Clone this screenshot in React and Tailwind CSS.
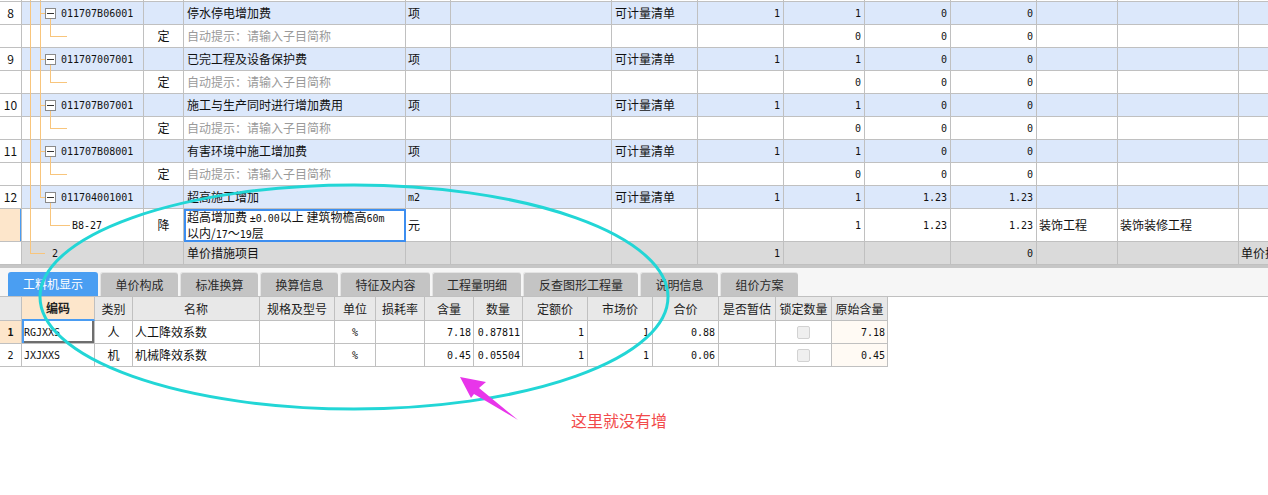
import React from "react";

const TOP_W = [
  "w-[22px]",
  "w-[122px]",
  "w-[40px]",
  "w-[222px]",
  "w-[45px]",
  "w-[161px]",
  "w-[86px]",
  "w-[86px]",
  "w-[81px]",
  "w-[86px]",
  "w-[86px]",
  "w-[81px]",
  "w-[121px]",
  "w-[100px]",
];

const BOT_W = [
  "w-[22px]",
  "w-[73px]",
  "w-[38px]",
  "w-[127px]",
  "w-[75px]",
  "w-[41px]",
  "w-[49px]",
  "w-[49px]",
  "w-[49px]",
  "w-[65px]",
  "w-[65px]",
  "w-[66px]",
  "w-[57px]",
  "w-[56px]",
  "w-[56px]",
];

const mono = "font-['DejaVu_Sans_Mono',monospace] text-[10px]";
const LINE = "bg-[#f8c57c]";

// 上方清单行
const rows = [
  { kind: "main", num: "8", code: "011707B06001", name: "停水停电增加费", unit: "项", c7: "1", c8: "1", c9: "0", c10: "0" },
  { kind: "sub" },
  { kind: "main", num: "9", code: "011707007001", name: "已完工程及设备保护费", unit: "项", c7: "1", c8: "1", c9: "0", c10: "0" },
  { kind: "sub" },
  { kind: "main", num: "10", code: "011707B07001", name: "施工与生产同时进行增加费用", unit: "项", c7: "1", c8: "1", c9: "0", c10: "0" },
  { kind: "sub" },
  { kind: "main", num: "11", code: "011707B08001", name: "有害环境中施工增加费", unit: "项", c7: "1", c8: "1", c9: "0", c10: "0" },
  { kind: "sub" },
  { kind: "lastMain", num: "12", code: "011704001001", name: "超高施工增加", unit: "m2", c7: "1", c8: "1", c9: "1.23", c10: "1.23" },
];

const Tree = ({ kind }) => {
  const full = "absolute top-0 bottom-[-1px] w-px";
  return (
    <>
      {kind === "root" ? (
        <>
          <span className={`absolute top-0 h-[12px] left-[8px] w-px ${LINE}`} />
          <span className={`absolute top-[11px] left-[8px] w-[15px] h-px ${LINE}`} />
        </>
      ) : (
        <span className={`${full} left-[8px] ${LINE}`} />
      )}
      {(kind === "main" || kind === "sub") && <span className={`${full} left-[18px] ${LINE}`} />}
      {kind === "lastMain" && <span className={`absolute top-0 h-[12px] left-[18px] w-px ${LINE}`} />}
      {(kind === "main" || kind === "lastMain") && (
        <>
          <span className={`absolute top-[11px] left-[18px] w-[5px] h-px ${LINE}`} />
          <span className="absolute top-[6px] left-[23px] w-[11px] h-[11px] border border-[#8a8a8a] bg-white flex items-center justify-center">
            <span className="w-[7px] h-px bg-[#333]" />
          </span>
          <span className={`absolute top-[17px] bottom-[-1px] left-[28px] w-px ${LINE}`} />
        </>
      )}
      {kind === "sub" && (
        <>
          <span className={`absolute top-0 h-[12px] left-[28px] w-px ${LINE}`} />
          <span className={`absolute top-[11px] left-[28px] w-[17px] h-px ${LINE}`} />
        </>
      )}
      {kind === "leaf" && (
        <>
          <span className={`absolute top-0 h-[17px] left-[28px] w-px ${LINE}`} />
          <span className={`absolute top-[16px] left-[28px] w-[20px] h-px ${LINE}`} />
        </>
      )}
    </>
  );
};

const cellBase = "shrink-0 box-border border-r border-b border-[#c0c0c0] flex items-center overflow-hidden whitespace-nowrap";

const TopRow = ({ r }) => {
  const isMain = r.kind === "main" || r.kind === "lastMain";
  const bg = isMain ? "bg-[#dce8fb]" : "bg-white";
  const vals = isMain ? [r.c7, r.c8, r.c9, r.c10] : ["", "0", "0", "0"];
  return (
    <div className="flex h-[23px]">
      <div className={`${cellBase} ${TOP_W[0]} bg-white justify-center text-[12px]`}>{r.num}</div>
      <div className={`${cellBase} ${TOP_W[1]} ${bg} relative overflow-visible pl-[39px] ${mono}`}>
        <Tree kind={r.kind} />
        {isMain && <span className="relative">{r.code}</span>}
      </div>
      <div className={`${cellBase} ${TOP_W[2]} ${bg} justify-center`}>{isMain ? "" : "定"}</div>
      <div className={`${cellBase} ${TOP_W[3]} ${bg} pl-[3px] ${isMain ? "" : "text-[#9a9a9a]"}`}>
        {isMain ? r.name : "自动提示：请输入子目简称"}
      </div>
      <div className={`${cellBase} ${TOP_W[4]} ${bg} pl-[2px] ${r.unit === "m2" ? mono : ""}`}>{isMain ? r.unit : ""}</div>
      <div className={`${cellBase} ${TOP_W[5]} ${bg}`} />
      <div className={`${cellBase} ${TOP_W[6]} ${bg} pl-[3px]`}>{isMain ? "可计量清单" : ""}</div>
      {vals.map((v, i) => (
        <div key={i} className={`${cellBase} ${TOP_W[7 + i]} ${bg} justify-end pr-[3px] ${mono}`}>
          {v}
        </div>
      ))}
      <div className={`${cellBase} ${TOP_W[11]} ${bg}`} />
      <div className={`${cellBase} ${TOP_W[12]} ${bg}`} />
      <div className={`${cellBase} ${TOP_W[13]} ${bg}`} />
    </div>
  );
};

const tabs = [
  { t: "工料机显示", w: "w-[90px]", active: true },
  { t: "单价构成", w: "w-[78px]" },
  { t: "标准换算", w: "w-[78px]" },
  { t: "换算信息", w: "w-[78px]" },
  { t: "特征及内容", w: "w-[90px]" },
  { t: "工程量明细", w: "w-[89px]" },
  { t: "反查图形工程量", w: "w-[115px]" },
  { t: "说明信息", w: "w-[78px]" },
  { t: "组价方案", w: "w-[78px]" },
];

const headers = ["", "编码", "类别", "名称", "规格及型号", "单位", "损耗率", "含量", "数量", "定额价", "市场价", "合价", "是否暂估", "锁定数量", "原始含量"];

const details = [
  { n: "1", code: "RGJXXS", cat: "人", name: "人工降效系数", qty: "7.18", amt: "0.87811", price: "1", mkt: "1", total: "0.88", orig: "7.18", sel: true },
  { n: "2", code: "JXJXXS", cat: "机", name: "机械降效系数", qty: "0.45", amt: "0.05504", price: "1", mkt: "1", total: "0.06", orig: "0.45" },
];

export default function App() {
  return (
    <div className="relative w-[1268px] h-[495px] overflow-hidden bg-white text-[12px] text-[#111] font-['Noto_Sans_CJK_SC',sans-serif]">
      {/* 上方清单表 */}
      <div className="flex h-[2px]">
        {TOP_W.map((w, i) => (
          <div key={i} className={`shrink-0 box-border border-r border-b border-[#c0c0c0] ${w} bg-white relative`}>
            {i === 1 && (
              <>
                <span className={`absolute top-0 bottom-0 left-[8px] w-px ${LINE}`} />
                <span className={`absolute top-0 bottom-0 left-[18px] w-px ${LINE}`} />
              </>
            )}
          </div>
        ))}
      </div>
      {rows.map((r, i) => (
        <TopRow key={i} r={r} />
      ))}

      {/* 当前子目行 */}
      <div className="flex h-[33px]">
        <div className={`${cellBase} ${TOP_W[0]} bg-[#fde6cb] relative`}>
          <span className="absolute right-[-1px] top-0 bottom-0 w-[2px] bg-[#4a9cf2]" />
        </div>
        <div className={`${cellBase} ${TOP_W[1]} bg-white relative overflow-visible pl-[50px] pt-[1px] ${mono}`}>
          <Tree kind="leaf" />
          <span className="relative">B8-27</span>
        </div>
        <div className={`${cellBase} ${TOP_W[2]} justify-center`}>降</div>
        <div className="shrink-0 box-border w-[222px] border-2 border-[#3d8ef0] flex items-center overflow-hidden pl-[1px] leading-[14px]">
          <span>
            超高增加费 <span className={mono}>±0.00</span>以上 建筑物檐高<span className={mono}>60m</span>
            <br />
            以内/<span className={mono}>17</span>～<span className={mono}>19</span>层
          </span>
        </div>
        <div className={`${cellBase} ${TOP_W[4]} pl-[2px]`}>元</div>
        <div className={`${cellBase} ${TOP_W[5]}`} />
        <div className={`${cellBase} ${TOP_W[6]}`} />
        <div className={`${cellBase} ${TOP_W[7]}`} />
        <div className={`${cellBase} ${TOP_W[8]} justify-end pr-[3px] ${mono}`}>1</div>
        <div className={`${cellBase} ${TOP_W[9]} justify-end pr-[3px] ${mono}`}>1.23</div>
        <div className={`${cellBase} ${TOP_W[10]} justify-end pr-[3px] ${mono}`}>1.23</div>
        <div className={`${cellBase} ${TOP_W[11]} pl-[2px]`}>装饰工程</div>
        <div className={`${cellBase} ${TOP_W[12]} pl-[2px]`}>装饰装修工程</div>
        <div className={`${cellBase} ${TOP_W[13]}`} />
      </div>

      {/* 单价措施项目 */}
      <div className="flex h-[23px]">
        <div className={`${cellBase} ${TOP_W[0]} bg-white`} />
        <div className={`${cellBase} ${TOP_W[1]} bg-[#dadada] relative overflow-visible pl-[30px] ${mono}`}>
          <Tree kind="root" />
          <span className="relative">2</span>
        </div>
        <div className={`${cellBase} ${TOP_W[2]} bg-[#dadada]`} />
        <div className={`${cellBase} ${TOP_W[3]} bg-[#dadada] pl-[3px]`}>单价措施项目</div>
        <div className={`${cellBase} ${TOP_W[4]} bg-[#dadada]`} />
        <div className={`${cellBase} ${TOP_W[5]} bg-[#dadada]`} />
        <div className={`${cellBase} ${TOP_W[6]} bg-[#dadada]`} />
        <div className={`${cellBase} ${TOP_W[7]} bg-[#dadada] justify-end pr-[3px] ${mono}`}>1</div>
        <div className={`${cellBase} ${TOP_W[8]} bg-[#dadada]`} />
        <div className={`${cellBase} ${TOP_W[9]} bg-[#dadada]`} />
        <div className={`${cellBase} ${TOP_W[10]} bg-[#dadada] justify-end pr-[3px] ${mono}`}>0</div>
        <div className={`${cellBase} ${TOP_W[11]} bg-[#dadada]`} />
        <div className={`${cellBase} ${TOP_W[12]} bg-[#dadada]`} />
        <div className={`${cellBase} ${TOP_W[13]} bg-[#dadada] pl-[2px]`}>单价措施项目</div>
      </div>

      {/* 分隔条 */}
      <div className="h-[3px] bg-[#c6c6c6]" />

      {/* 页签 */}
      <div className="h-[28px] bg-[#f6f6f6] flex items-end gap-[2px] pl-[8px]">
        {tabs.map((t) => (
          <div
            key={t.t}
            className={`${t.w} h-[24px] shrink-0 rounded-t-[3px] flex items-center justify-center text-[12px] ${
              t.active
                ? "bg-[#4a9ef2] text-white"
                : "bg-[#c4c4c4] text-[#2a2a2a] border-l border-t border-[#e4e4e4]"
            }`}
          >
            {t.t}
          </div>
        ))}
      </div>

      {/* 工料机明细表 */}
      <div className="flex h-[25px] border-t border-[#c0c0c0]">
        {headers.map((h, i) => (
          <div
            key={i}
            className={`${cellBase} ${BOT_W[i]} justify-center text-[#222] ${
              i === 1 ? "bg-[#fde6cb] font-bold border-b-2 border-b-[#4a9cf2]" : "bg-[#e8e8e8]"
            }`}
          >
            {h}
          </div>
        ))}
      </div>
      {details.map((d) => (
        <div key={d.n} className="flex h-[23px]">
          <div className={`${cellBase} ${BOT_W[0]} justify-center ${d.sel ? "bg-[#fde6cb] font-bold" : "bg-white"} ${mono}`}>
            {d.n}
          </div>
          <div
            className={`${cellBase} ${BOT_W[1]} pl-[2px] ${mono} ${
              d.sel ? "shadow-[inset_2px_0_0_#4a9cf2,inset_-2px_-2px_0_#6e6e6e]" : ""
            }`}
          >
            {d.code}
          </div>
          <div className={`${cellBase} ${BOT_W[2]} justify-center`}>{d.cat}</div>
          <div className={`${cellBase} ${BOT_W[3]} pl-[2px]`}>{d.name}</div>
          <div className={`${cellBase} ${BOT_W[4]}`} />
          <div className={`${cellBase} ${BOT_W[5]} justify-center ${mono}`}>%</div>
          <div className={`${cellBase} ${BOT_W[6]}`} />
          <div className={`${cellBase} ${BOT_W[7]} justify-end pr-[2px] ${mono}`}>{d.qty}</div>
          <div className={`${cellBase} ${BOT_W[8]} justify-end pr-[2px] ${mono}`}>{d.amt}</div>
          <div className={`${cellBase} ${BOT_W[9]} justify-end pr-[3px] ${mono}`}>{d.price}</div>
          <div className={`${cellBase} ${BOT_W[10]} justify-end pr-[3px] ${mono}`}>{d.mkt}</div>
          <div className={`${cellBase} ${BOT_W[11]} justify-end pr-[3px] ${mono}`}>{d.total}</div>
          <div className={`${cellBase} ${BOT_W[12]}`} />
          <div className={`${cellBase} ${BOT_W[13]} justify-center`}>
            <span className="w-[13px] h-[13px] rounded-[2px] border border-[#d2d2d2] bg-[#efefef]" />
          </div>
          <div className={`${cellBase} ${BOT_W[14]} justify-end pr-[2px] bg-[#fffaf4] ${mono}`}>{d.orig}</div>
        </div>
      ))}

      {/* 标注 */}
      <svg className="absolute inset-0 pointer-events-none" width="1268" height="495" viewBox="0 0 1268 495">
        <ellipse cx="354" cy="297" rx="314" ry="112" fill="none" stroke="#22d6d6" strokeWidth="3" />
        <path d="M460 377 L486 382 L479 388 L518 420 L474 394 L471 398 Z" fill="#e835ea" />
      </svg>
      <div className="absolute left-[571px] top-[411px] text-[16px] leading-[18px] text-[#f24a4a]">这里就没有增</div>
    </div>
  );
}
